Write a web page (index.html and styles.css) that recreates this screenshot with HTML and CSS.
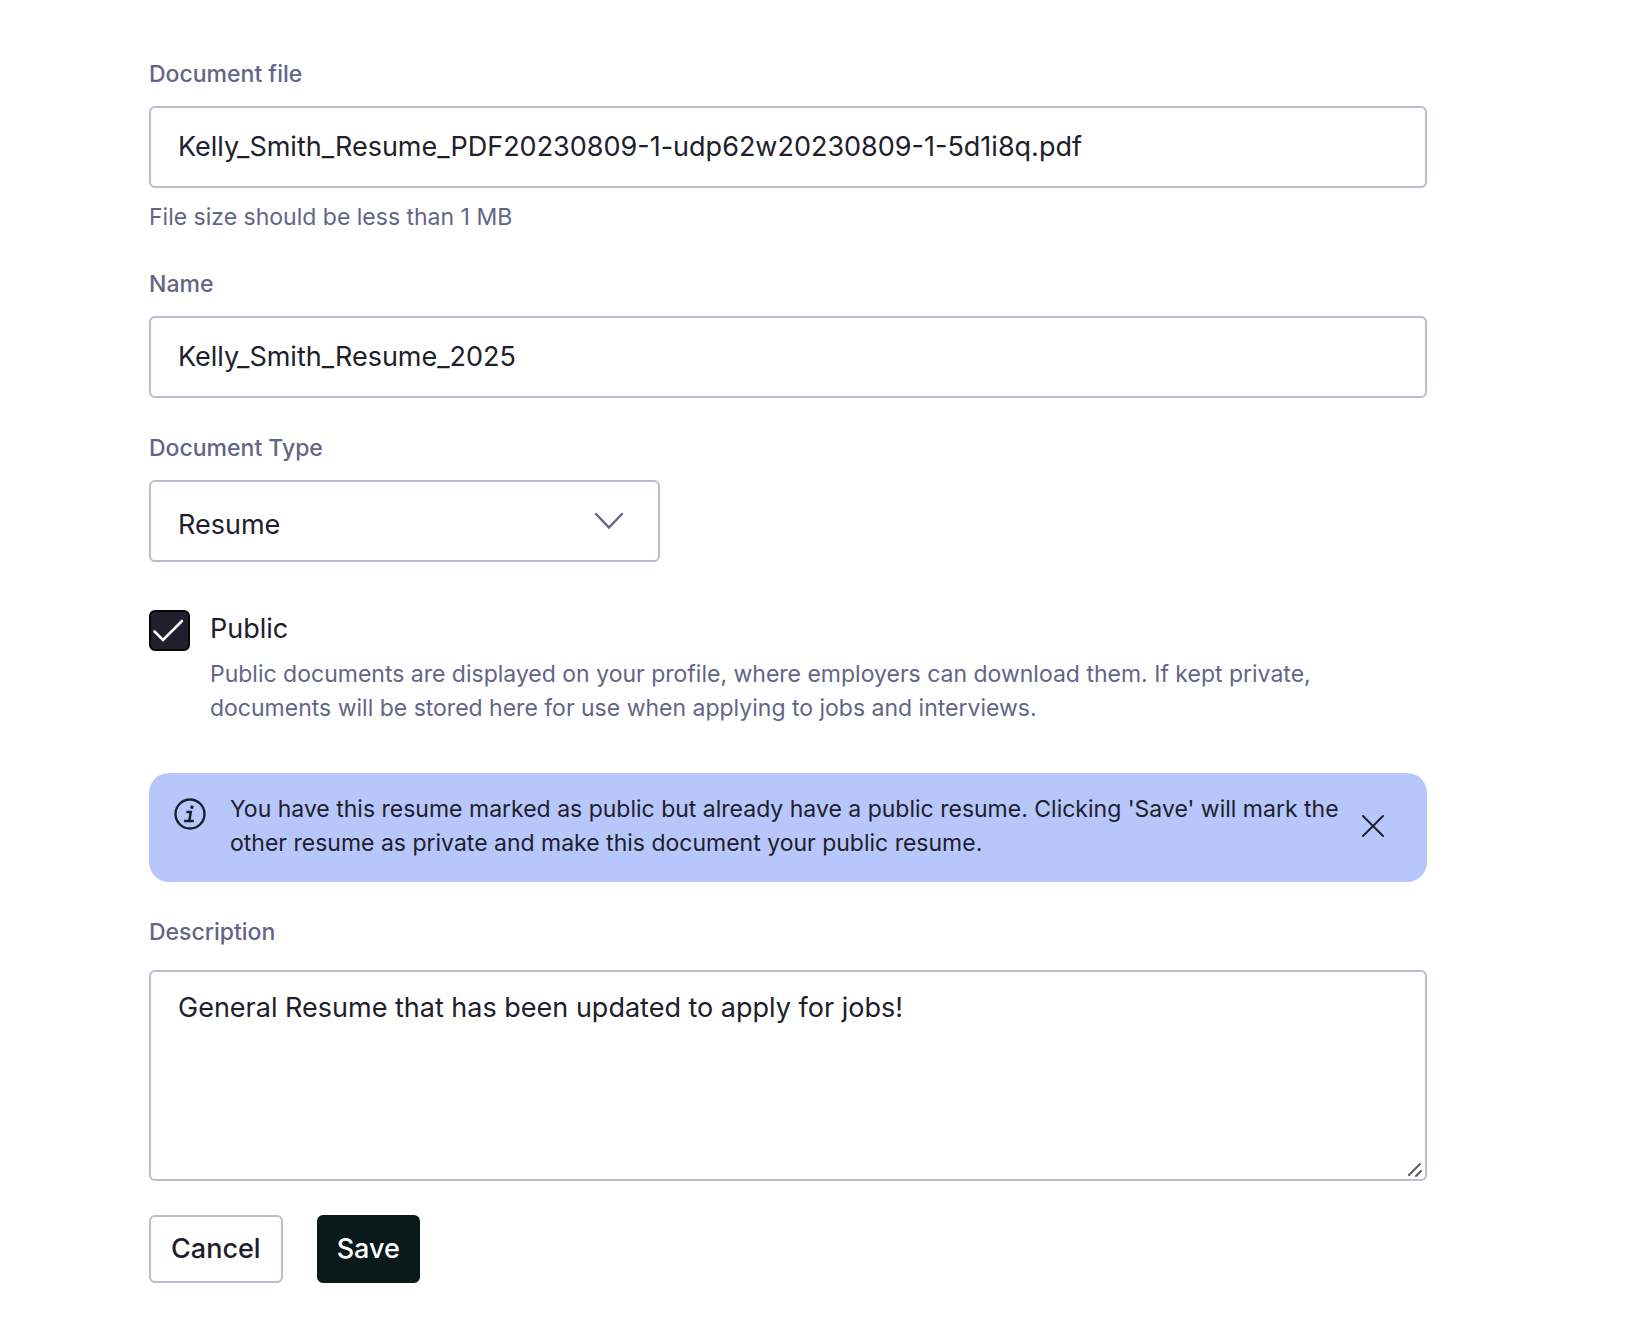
FILE: index.html
```
<!DOCTYPE html>
<html lang="en">
<head>
  <meta charset="UTF-8">
  <meta name="viewport" content="width=device-width, initial-scale=1">
  <title>Edit document</title>
  <link rel="stylesheet" href="styles.css">
</head>
<body>
  <form class="document-form">
    <div class="field">
      <label for="file">Document file</label>
      <input id="file" class="control" type="text" value="Kelly_Smith_Resume_PDF20230809-1-udp62w20230809-1-5d1i8q.pdf" aria-describedby="file-hint">
      <p id="file-hint" class="hint">File size should be less than 1 MB</p>
    </div>

    <div class="field">
      <label for="name">Name</label>
      <input id="name" class="control" type="text" value="Kelly_Smith_Resume_2025">
    </div>

    <div class="field">
      <label for="type">Document Type</label>
      <select id="type" class="control select">
        <option>Resume</option>
        <option>Cover Letter</option>
        <option>Transcript</option>
        <option>Other</option>
      </select>
    </div>

    <div class="check">
      <input id="public" type="checkbox" checked aria-describedby="public-hint">
      <div class="check-text">
        <label for="public">Public</label>
        <p id="public-hint">Public documents are displayed on your profile, where employers can download them. If kept private, documents will be stored here for use when applying to jobs and interviews.</p>
      </div>
    </div>

    <div class="alert" role="status">
      <svg class="info-icon" viewBox="0 0 32 32" fill="none" stroke="#0e2529" aria-hidden="true">
        <circle cx="16" cy="16" r="14.5" stroke-width="2.4"/>
        <path d="M12.4 13.9H16.8L15.3 22.8M10.1 23.1H19.8" stroke-width="2.5"/>
        <path d="M18.2 7.6L17.6 10.8" stroke-width="3"/>
      </svg>
      <p>You have this resume marked as public but already have a public resume. Clicking 'Save' will mark the other resume as private and make this document your public resume.</p>
      <button class="close" type="button" aria-label="Dismiss">
        <svg viewBox="0 0 24 24" fill="none" stroke="#20202c" stroke-width="2" stroke-linecap="round" aria-hidden="true">
          <path d="M2 2L22 22M22 2L2 22"/>
        </svg>
      </button>
    </div>

    <div class="field description">
      <label for="description">Description</label>
      <div class="textarea-wrap">
        <textarea id="description" class="control">General Resume that has been updated to apply for jobs!</textarea>
        <svg class="grip" viewBox="0 0 16 16" stroke="#5c5c5c" stroke-width="2" stroke-linecap="round" aria-hidden="true">
          <path d="M1 13L12 2M8 14L13 9"/>
        </svg>
      </div>
    </div>

    <div class="actions">
      <button class="btn" type="button">Cancel</button>
      <button class="btn btn-primary" type="submit">Save</button>
    </div>
  </form>
</body>
</html>
```
FILE: styles.css
```
* { box-sizing: border-box; }

body {
  margin: 0;
  background: #fff;
  color: #20202c;
  font-family: Inter, "Liberation Sans", sans-serif;
  font-size: 23px;
  line-height: 34px;
}

p { margin: 0; }

input, select, textarea, button {
  margin: 0;
  font: inherit;
  color: inherit;
}

.document-form { padding: 57px 209px 48px 149px; }

/* fields */
.field { margin-bottom: 33px; }

.field label {
  display: block;
  margin-bottom: 15px;
  color: #636587;
  font-weight: 500;
}

.control {
  display: block;
  width: 100%;
  height: 82px;
  padding: 0 27px 2px;
  border: 2px solid #b9bbd0;
  border-radius: 6px;
  background: #fff;
  font-size: 27px;
}

.hint {
  margin-top: 12px;
  color: #636587;
}

.select {
  width: 40%;
  padding-top: 8px;
  padding-bottom: 0;
  appearance: none;
  background: #fff url("data:image/svg+xml,%3Csvg xmlns='http://www.w3.org/2000/svg' width='30' height='18' fill='none' stroke='%23636587' stroke-width='2.4' stroke-linecap='round'%3E%3Cpath d='M2 2L15 15.500L28 2'/%3E%3C/svg%3E") no-repeat right 34px center;
}

/* public checkbox */
.check {
  display: flex;
  gap: 20px;
  margin: 48px 0;
}

.check input {
  flex: none;
  width: 41px;
  height: 41px;
  appearance: none;
  border: 2px solid #05050a;
  border-radius: 6px;
}

.check input:checked {
  background: #20202c url("data:image/svg+xml,%3Csvg xmlns='http://www.w3.org/2000/svg' width='37' height='37' fill='none' stroke='white' stroke-width='2.6' stroke-linecap='round'%3E%3Cpath d='M3.500 19.500L12 28L31 9'/%3E%3C/svg%3E") no-repeat center;
}

.check-text { padding-top: 2px; }

.check-text label {
  display: block;
  margin-bottom: 11px;
  font-size: 27px;
}

.check-text p { color: #636587; }

/* alert */
.alert {
  display: flex;
  margin-bottom: 33px;
  padding: 19px 37px 22px 25px;
  border-radius: 20px;
  background: #b8c7fb;
}

.alert p { flex: 1; }

.info-icon {
  flex: none;
  width: 32px;
  height: 32px;
  margin: 6px 24px 0 0;
}

.close {
  display: flex;
  align-self: center;
  margin-left: 8px;
  padding: 5px;
  border: 0;
  background: none;
}

.close svg {
  width: 24px;
  height: 24px;
}

/* description */
.description { margin-bottom: 34px; }

.description label { margin-bottom: 21px; }

.textarea-wrap { position: relative; }

.textarea-wrap textarea {
  height: 211px;
  padding: 19px 27px;
  resize: vertical;
}

textarea::-webkit-resizer { display: none; }

.grip {
  position: absolute;
  right: 3px;
  bottom: 3px;
  width: 16px;
  height: 16px;
  fill: none;
  pointer-events: none;
}

/* buttons */
.actions {
  display: flex;
  gap: 34px;
}

.btn {
  height: 68px;
  padding: 0 20px;
  border: 2px solid #b9bbd0;
  border-radius: 6px;
  background: #fff;
  font-size: 27px;
  font-weight: 500;
}

.btn-primary {
  padding: 0 18px;
  border-color: #09191c;
  background: #09191c;
  color: #fff;
}
```
